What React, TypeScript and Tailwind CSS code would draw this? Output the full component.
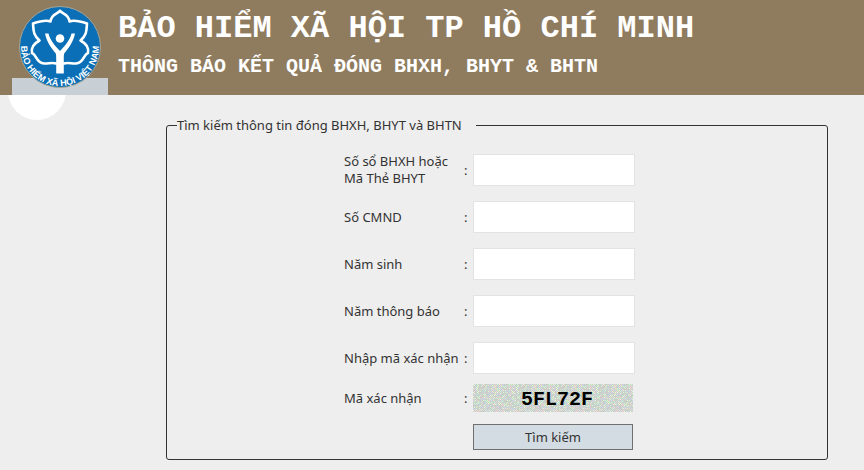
import React from 'react';

const fields = [
  { id: 'so-bhxh', label: 'Số sổ BHXH hoặc Mã Thẻ BHYT' },
  { id: 'so-cmnd', label: 'Số CMND' },
  { id: 'nam-sinh', label: 'Năm sinh' },
  { id: 'nam-thong-bao', label: 'Năm thông báo' },
  { id: 'nhap-ma', label: 'Nhập mã xác nhận' },
];

const speckColors = ['#ffd4cc', '#ccffcc', '#ccd4f4', '#f4f8cc', '#c8e4e0', '#cccccc', '#e0d0e0', '#c8d0c8'];

// Staggered one-pixel specks, coloured by a small deterministic generator.
const specks = (() => {
  let seed = 7;
  const list: { x: number; y: number; fill: string }[] = [];
  for (let y = 0; y < 28; y += 1) {
    for (let x = y % 2; x < 40; x += 2) {
      seed = (seed * 16807) % 2147483647;
      list.push({ x, y, fill: speckColors[(seed >> 8) % speckColors.length] });
    }
  }
  return list;
})();

function Logo() {
  return (
    <svg viewBox="0 0 84 84" className="relative h-[84px] w-[84px]" role="img" aria-label="Bảo hiểm xã hội Việt Nam">
      <circle cx="42" cy="42" r="40.5" fill="#0a6fb6" stroke="#a5a596" strokeWidth="1" />
      <g fill="none" stroke="#fff" strokeWidth="2.6" strokeLinejoin="round" strokeLinecap="round">
        <path d="M42 6 C38.5 9.5 33 9.5 32.5 16.5 C27 14.5 21 16.5 15 18.5 C15.5 25 15 30 21.5 35.5 C15 39 13 43 14 48 C19 50 18 58 26 58.5 C30 59 34 57 38 58.5" />
        <path d="M42 6 C45.5 9.5 51 9.5 51.5 16.5 C57 14.5 63 16.5 69 18.5 C68.5 25 69 30 62.5 35.5 C69 39 71 43 70 48 C65 50 66 58 58 58.5 C54 59 50 57 46 58.5" />
      </g>
      <circle cx="42" cy="33.5" r="4.3" fill="#fff" />
      <path
        d="M27 28.5 H30.5 C32 35 37 41 42 46 C47 41 52 35 53.5 28.5 H57 C55 38 50 44 46.5 48 C45.8 49 45.8 51 45.8 54 V68.5 H38.2 V54 C38.2 51 38.2 49 37.5 48 C34 44 29 38 27 28.5 Z"
        fill="#fff"
      />
      <path id="logo-arc" d="M3 40 V42 A39 39 0 0 0 81 42 V40" fill="none" />
      <text fill="#fff" fontSize="9" fontWeight="700" className="font-['Liberation_Sans',sans-serif]">
        <textPath href="#logo-arc" startOffset="50%" textAnchor="middle">
          BẢO HIỂM XÃ HỘI VIỆT NAM
        </textPath>
      </text>
    </svg>
  );
}

function Captcha() {
  return (
    <div role="img" aria-label="5FL72F" className="relative h-7 w-40 bg-[#c8d0cc]">
      <svg className="block h-full w-full" shapeRendering="crispEdges" aria-hidden="true">
        <pattern id="specks" width="40" height="28" patternUnits="userSpaceOnUse">
          {specks.map((s) => (
            <rect key={`${s.x}-${s.y}`} x={s.x} y={s.y} width="1" height="1" fill={s.fill} />
          ))}
        </pattern>
        <rect width="100%" height="100%" fill="url(#specks)" />
      </svg>
      <span className="absolute inset-y-0 left-12 font-['Liberation_Mono',monospace] text-xl leading-8 font-bold text-black">
        5FL72F
      </span>
    </div>
  );
}

export default function App() {
  return (
    <div className="min-h-screen bg-[#eeeeee] pb-2 font-['Noto_Sans',sans-serif] text-[13px] leading-[17px] text-[#333333]">
      <div className="relative">
        <div className="absolute top-[62px] left-2 h-[58px] w-[58px] rounded-full bg-white" />
        <header className="relative flex h-[95px] gap-[10px] bg-[#8f7c5f] pl-3 text-white">
          <div className="relative flex w-24 shrink-0 justify-center pt-[5px]">
            <div className="absolute inset-x-0 bottom-0 h-[17px] bg-[#c8d0d6]" />
            <Logo />
          </div>
          <div className="flex flex-col gap-[10px] pt-[13px] font-['Liberation_Mono',monospace] font-bold whitespace-nowrap">
            <h1 className="text-[32px] leading-8">BẢO HIỂM XÃ HỘI TP HỒ CHÍ MINH</h1>
            <p className="text-xl leading-6">THÔNG BÁO KẾT QUẢ ĐÓNG BHXH, BHYT &amp; BHTN</p>
          </div>
        </header>
      </div>

      <form onSubmit={(e) => e.preventDefault()} className="mt-[22px] mr-9 ml-[166px]">
        <fieldset className="rounded-[3px] border border-[#333333] px-[10px] pb-[9px]">
          <legend className="pr-[14px]">Tìm kiếm thông tin đóng BHXH, BHYT và BHTN</legend>
          <div className="mx-auto mt-5 w-[306px]">
            <div className="flex flex-col gap-[15px]">
              {fields.map((f) => (
                <div key={f.id} className="flex items-center">
                  <label htmlFor={f.id} className="-my-1 w-[120px] pr-1">
                    {f.label}
                  </label>
                  <span className="w-[9px]">:</span>
                  <input id={f.id} type="text" className="h-8 w-[162px] border border-[#e3e3e3] bg-white px-2 outline-none" />
                </div>
              ))}
            </div>
            <div className="mt-[10px] flex items-center">
              <span className="w-[120px]">Mã xác nhận</span>
              <span className="w-[9px]">:</span>
              <Captcha />
            </div>
            <button
              type="submit"
              className="mt-3 ml-[129px] block h-[26px] w-40 border border-[#707070] bg-[#d3dce2] text-center leading-6"
            >
              Tìm kiếm
            </button>
          </div>
        </fieldset>
      </form>
    </div>
  );
}
